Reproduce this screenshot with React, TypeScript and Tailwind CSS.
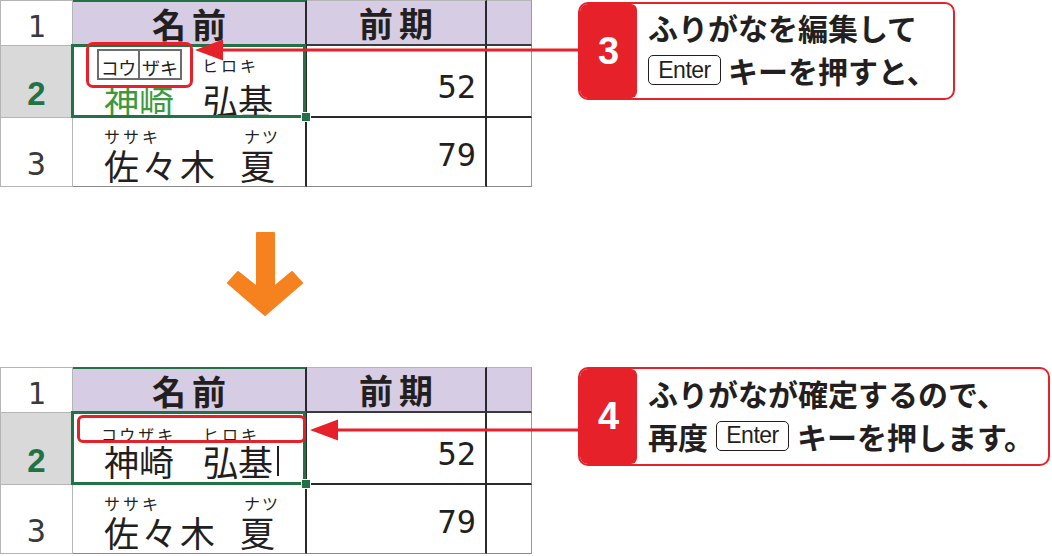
import React from "react";

const JP = "font-['Noto_Sans_CJK_JP','Noto_Sans',sans-serif]";

function RedArrow({ width, className }: { width: number; className: string }) {
  return (
    <svg className={className} width={width} height={22} viewBox={`0 0 ${width} 22`}>
      <polygon points="0,11 28,0.5 28,21.5" fill="#e6212a" />
      <rect x={26} y={9.5} width={width - 26} height={3} fill="#e6212a" />
    </svg>
  );
}

function OrangeArrow() {
  return (
    <svg width={80} height={90} viewBox="0 0 80 90">
      <polygon
        points="31,2 48,2 48,56 66,41 76,52 39,84 2,52 12,41 31,56"
        fill="#f5821f"
        stroke="#f5821f"
        strokeWidth={2}
        strokeLinejoin="round"
      />
    </svg>
  );
}

function Key() {
  return (
    <span className="flex h-[30px] w-[73px] shrink-0 items-center justify-center rounded-[5px] border-[1.5px] border-[#231f20] font-['Liberation_Sans',sans-serif] text-[23px] font-normal leading-none tracking-[-0.5px]">
      Enter
    </span>
  );
}

function Callout({ n, className, children }: { n: string; className: string; children: React.ReactNode }) {
  return (
    <div className={`flex overflow-hidden rounded-[10px] border-[2.5px] border-[#e6212a] bg-white ${className}`}>
      <div className="flex w-[57px] shrink-0 items-center justify-center rounded-r-[6px] bg-[#e6212a] font-['Liberation_Sans',sans-serif] text-[38px] font-bold text-white">
        {n}
      </div>
      <div className="flex flex-col justify-center pb-[5px] pl-[11px] text-[30px] font-bold leading-none text-[#231f20]">
        {children}
      </div>
    </div>
  );
}

function Line({ children }: { children: React.ReactNode }) {
  return <div className="flex h-[43px] items-center whitespace-nowrap">{children}</div>;
}

function Selection() {
  return (
    <>
      <div className="absolute -top-[2px] -left-[2px] -right-[1px] -bottom-[2px] z-10 border-[3px] border-[#217346]" />
      <div className="absolute -right-[6px] -bottom-[6px] z-10 h-[10px] w-[10px] border border-white bg-[#217346]" />
    </>
  );
}

const digits = "font-['DejaVu_Sans_Mono','Liberation_Mono',monospace] font-extralight";

function Sheet({ after }: { after: boolean }) {
  const gridLine = "border-[#b5b5b5]";
  return (
    <div className={`grid w-[532px] grid-cols-[72px_234px_180px_45px] grid-rows-[46px_72px_69px] border-l ${gridLine} ${JP} text-[#231f20]`}>
      {/* row 1 */}
      <div className={`flex items-end justify-center border-t border-r border-b ${gridLine} pb-[3px] ${digits} text-[30px] leading-none text-[#3a3a3a]`}>
        1
      </div>
      <div className="flex items-center justify-center border-t-2 border-r-2 border-b-2 border-t-[#217346] border-r-[#2a2a2a] border-b-[#3a3a3a] bg-[#d6cce3] pl-[6px] text-[34px] font-bold tracking-[6px]">
        名前
      </div>
      <div className="flex items-center justify-center border-t border-r-2 border-b-2 border-t-[#b5b5b5] border-r-[#2a2a2a] border-b-[#3a3a3a] bg-[#d6cce3] pl-[6px] text-[34px] font-bold tracking-[6px]">
        前期
      </div>
      <div className="border-t border-r border-b-2 border-t-[#b5b5b5] border-r-[#9a9a9a] border-b-[#3a3a3a] bg-[#d6cce3]" />

      {/* row 2 */}
      <div className={`flex items-end justify-center border-r border-b ${gridLine} bg-[#d9d9d9] pb-[7px] font-['Liberation_Sans',sans-serif] text-[33px] font-bold leading-none text-[#217346]`}>
        2
      </div>
      <div className="relative border-r-2 border-b-2 border-[#2a2a2a] bg-white">
        {after ? (
          <div className="flex flex-col pt-[13px] pl-[28px]">
            <div className="flex h-[16px] items-end text-[16px] leading-none">
              <span className="w-[102px] tracking-[3px]">コウザキ</span>
              <span className="tracking-[3px]">ヒロキ</span>
            </div>
            <div className="mt-[1px] flex items-center pl-[3px] text-[35px] leading-[35px]">
              <span>神崎</span>
              <span className="ml-[29px]">弘基</span>
              <span className="ml-[4px] inline-block h-[30px] w-[2px] bg-[#231f20]" />
            </div>
          </div>
        ) : (
          <div className="flex flex-col pt-[3px] pl-[24px]">
            <div className="flex h-[31px] items-end">
              <div className="flex h-[31px] border-2 border-[#6d6d6d]">
                <span className="flex w-[41px] items-end justify-center border-r-2 border-[#6d6d6d] pb-[2px] text-[18px] leading-none">
                  コウ
                </span>
                <span className="flex w-[40px] items-end justify-center pb-[2px] text-[18px] leading-none">
                  ザキ
                </span>
              </div>
              <span className="mb-[7px] ml-[20px] text-[16px] leading-none tracking-[3px]">ヒロキ</span>
            </div>
            <div className="mt-[2px] flex pl-[7px] text-[35px] leading-[35px]">
              <span className="text-[#3c9a3c]">神崎</span>
              <span className="ml-[29px]">弘基</span>
            </div>
          </div>
        )}
        <Selection />
        {after ? (
          <div className="absolute top-[2px] left-[4px] z-20 h-[28px] w-[229px] rounded-[6px] border-[3px] border-[#e6212a]" />
        ) : (
          <div className="absolute -top-[4px] left-[13px] z-20 h-[46px] w-[107px] rounded-[7px] border-[3px] border-[#e6212a]" />
        )}
      </div>
      <div className={`flex items-start justify-end border-r-2 border-b-2 border-[#2a2a2a] bg-white pt-[24px] pr-[9px] ${digits} text-[32px] leading-[34px]`}>
        52
      </div>
      <div className="border-r border-b-2 border-r-[#9a9a9a] border-b-[#2a2a2a] bg-white" />

      {/* row 3 */}
      <div className={`flex items-end justify-center border-r border-b ${gridLine} bg-white pb-[6px] ${digits} text-[32px] leading-none text-[#3a3a3a]`}>
        3
      </div>
      <div className="border-r-2 border-b border-r-[#2a2a2a] border-b-[#8a8a8a] bg-white">
        <div className="flex flex-col pt-[10px] pl-[31px]">
          <div className="flex h-[16px] items-end text-[16px] leading-none">
            <span className="w-[140px] tracking-[3px]">ササキ</span>
            <span className="tracking-[2px]">ナツ</span>
          </div>
          <div className="mt-[3px] flex text-[35px] leading-[35px]">
            <span className="tracking-[3px]">佐々木</span>
            <span className="ml-[22px]">夏</span>
          </div>
        </div>
      </div>
      <div className={`flex items-start justify-end border-r-2 border-b border-r-[#2a2a2a] border-b-[#8a8a8a] bg-white pt-[20px] pr-[9px] ${digits} text-[32px] leading-[34px]`}>
        79
      </div>
      <div className="border-r border-b border-r-[#9a9a9a] border-b-[#8a8a8a] bg-white" />
    </div>
  );
}

export default function App() {
  return (
    <div className={`relative h-[556px] w-[1052px] overflow-hidden bg-white ${JP}`}>
      <section className="relative flex h-[190px] items-start">
        <Sheet after={false} />
        <div className="mt-[2px] ml-[46px]">
          <Callout n="3" className="h-[98px] w-[377px]">
            <Line>ふりがなを編集して</Line>
            <Line>
              <Key />
              <span className="ml-[7px]">キーを押すと、</span>
            </Line>
          </Callout>
        </div>
        <RedArrow width={385} className="absolute top-[39px] left-[195px] z-30" />
      </section>

      <div className="h-[177px] pt-[41px] pl-[226px]">
        <OrangeArrow />
      </div>

      <section className="relative flex h-[189px] items-start">
        <Sheet after />
        <div className="ml-[46px]">
          <Callout n="4" className="h-[99px] w-[472px]">
            <Line>ふりがなが確定するので、</Line>
            <Line>
              <span>再度</span>
              <span className="mx-[8px]">
                <Key />
              </span>
              <span>キーを押します。</span>
            </Line>
          </Callout>
        </div>
        <RedArrow width={270} className="absolute top-[52px] left-[310px] z-30" />
      </section>
    </div>
  );
}
